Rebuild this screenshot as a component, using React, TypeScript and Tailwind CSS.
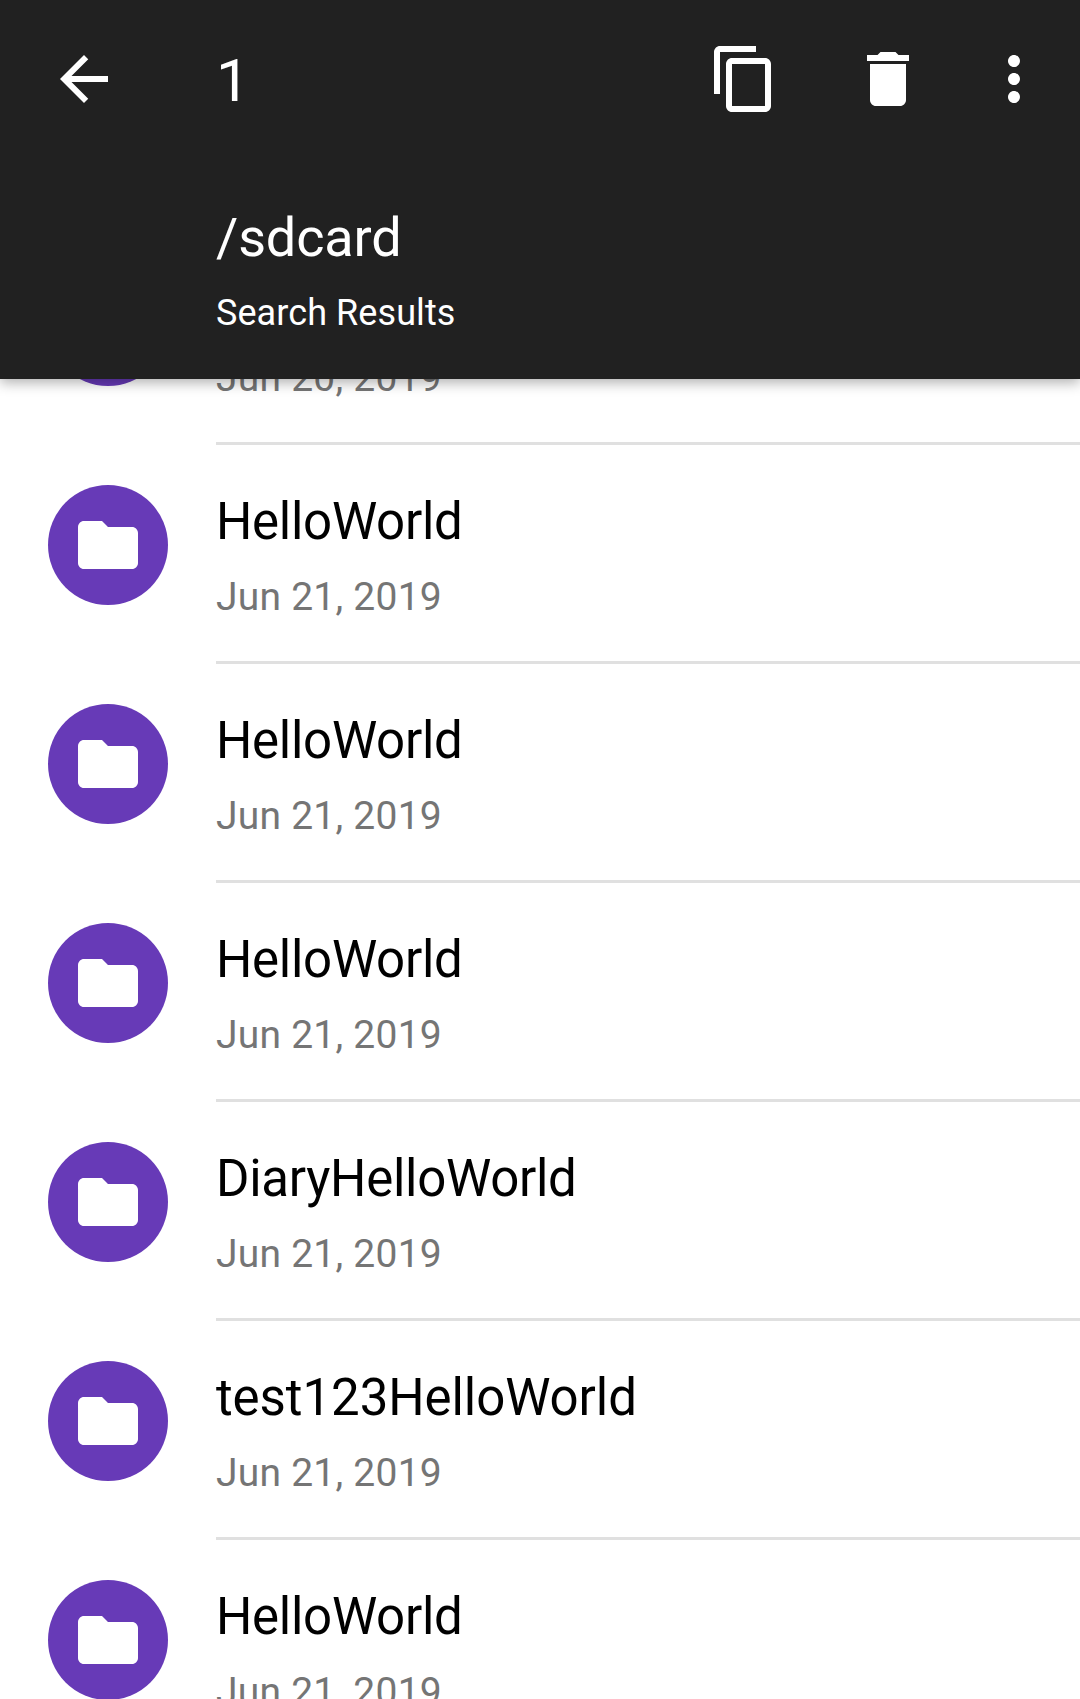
const rows = [
  { name: '', date: 'Jun 20, 2019', tracking: 'tracking-[-0.28px]' },
  { name: 'HelloWorld', date: 'Jun 21, 2019', tracking: 'tracking-[-0.28px]' },
  { name: 'HelloWorld', date: 'Jun 21, 2019', tracking: 'tracking-[-0.28px]' },
  { name: 'HelloWorld', date: 'Jun 21, 2019', tracking: 'tracking-[-0.28px]' },
  { name: 'DiaryHelloWorld', date: 'Jun 21, 2019', tracking: 'tracking-[-0.28px]' },
  { name: 'test123HelloWorld', date: 'Jun 21, 2019', tracking: 'tracking-[-0.07px]' },
  { name: 'HelloWorld', date: 'Jun 21, 2019', tracking: 'tracking-[-0.28px]' },
];

function Icon({ d, className }: { d: string; className: string }) {
  return (
    <svg viewBox="0 0 24 24" fill="currentColor" className={className}>
      <path d={d} />
    </svg>
  );
}

function Row({ name, date, tracking }: { name: string; date: string; tracking: string }) {
  return (
    <li className="flex h-[219px] shrink-0 pl-12">
      <div className="mt-10 flex size-[120px] shrink-0 items-center justify-center rounded-full bg-[#673ab7] text-white">
        <Icon className="size-[72px]" d="M10 4H4c-1.1 0-1.99.9-1.99 2L2 18c0 1.1.9 2 2 2h16c1.1 0 2-.9 2-2V8c0-1.1-.9-2-2-2h-8l-2-2z" />
      </div>
      <div className="ml-12 flex-1 border-b-[3px] border-[#e0e0e0] pt-[47px] whitespace-nowrap">
        <div className={`h-[60px] text-[51px] leading-[60px] text-black ${tracking}`}>{name}</div>
        <div className="mt-[22px] text-[39px] leading-[46px] tracking-[0.24px] text-[#757575]">{date}</div>
      </div>
    </li>
  );
}

export default function App() {
  return (
    <div className="flex h-[1699px] w-[1080px] flex-col overflow-hidden bg-white font-['Roboto',sans-serif]">
      <header className="relative z-10 h-[379px] shrink-0 bg-[#212121] text-white shadow-[0_4px_12px_rgba(0,0,0,0.3)]">
        <div className="flex h-[158px] items-center pl-12">
          <Icon className="size-[72px]" d="M20 11H7.83l5.59-5.59L12 4l-8 8 8 8 1.41-1.41L7.83 13H20v-2z" />
          <span className="ml-[96px] flex-1 pt-[4px] text-[60px] leading-[70px]">1</span>
          <Icon className="size-[72px]" d="M16 1H4c-1.1 0-2 .9-2 2v14h2V3h12V1zm3 4H8c-1.1 0-2 .9-2 2v14c0 1.1.9 2 2 2h11c1.1 0 2-.9 2-2V7c0-1.1-.9-2-2-2zm0 16H8V7h11v14z" />
          <Icon className="ml-[72px] size-[72px]" d="M6 19c0 1.1.9 2 2 2h8c1.1 0 2-.9 2-2V7H6v12zM19 4h-3.5l-1-1h-5l-1 1H5v2h14V4z" />
          <Icon className="mr-[30px] ml-[54px] size-[72px]" d="M12 8c1.1 0 2-.9 2-2s-.9-2-2-2-2 .9-2 2 .9 2 2 2zm0 2c-1.1 0-2 .9-2 2s.9 2 2 2 2-.9 2-2-.9-2-2-2zm0 6c-1.1 0-2 .9-2 2s.9 2 2 2 2-.9 2-2-.9-2-2-2z" />
        </div>
        <div className="pt-[48px] pl-[216px]">
          <div className="text-[54px] leading-[64px] tracking-[-0.15px]">/sdcard</div>
          <div className="mt-[22px] text-[36px] leading-[42px] tracking-[0.08px]">Search Results</div>
        </div>
      </header>
      <ul className="-mt-[153px] flex flex-col">
        {rows.map((row, i) => (
          <Row key={i} name={row.name} date={row.date} tracking={row.tracking} />
        ))}
      </ul>
    </div>
  );
}
